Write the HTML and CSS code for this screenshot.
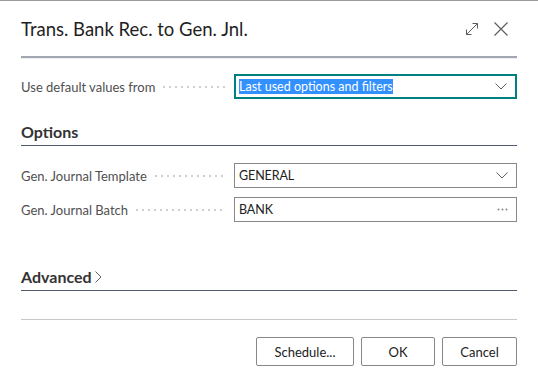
FILE: index.html
```html
<!DOCTYPE html>
<html lang="en">
<head>
    <meta charset="UTF-8">
    <title>Trans. Bank Rec. to Gen. Jnl.</title>
    <link rel="stylesheet" href="styles.css">
</head>
<body>
    <div class="dialog">
        <div class="dialog-header">
            <h1 class="dialog-title">Trans. Bank Rec. to Gen. Jnl.</h1>
            <div class="header-actions">
                <button class="icon-btn" title="Expand">
                    <svg width="14" height="14" viewBox="0 0 14 14" fill="none" stroke="#605e5c" stroke-width="1">
                        <path d="M1.5 12.5 L12.5 1.5 M7.5 1.5 H12.5 V6.5 M1.5 7.5 V12.5 H6.5"/>
                    </svg>
                </button>
                <button class="icon-btn" title="Close">
                    <svg width="16" height="16" viewBox="0 0 16 16" fill="none" stroke="#605e5c" stroke-width="1.2">
                        <path d="M1.5 1.5 L14.5 14.5 M14.5 1.5 L1.5 14.5"/>
                    </svg>
                </button>
            </div>
        </div>

        <div class="dialog-body">
            <div class="field-row first-row">
                <label class="field-label">Use default values from</label>
                <div class="field-input focused">
                    <span class="selected-text">Last used options and filters</span>
                    <svg class="field-icon" width="12" height="7" viewBox="0 0 12 7" fill="none" stroke="#605e5c" stroke-width="1">
                        <path d="M0.5 0.5 L6 6 L11.5 0.5"/>
                    </svg>
                </div>
            </div>

            <h2 class="group-title">Options</h2>

            <div class="field-list">
                <div class="field-row">
                    <label class="field-label">Gen. Journal Template</label>
                    <div class="field-input">
                        <span>GENERAL</span>
                        <svg class="field-icon" width="12" height="7" viewBox="0 0 12 7" fill="none" stroke="#605e5c" stroke-width="1">
                            <path d="M0.5 0.5 L6 6 L11.5 0.5"/>
                        </svg>
                    </div>
                </div>
                <div class="field-row">
                    <label class="field-label">Gen. Journal Batch</label>
                    <div class="field-input">
                        <span>BANK</span>
                        <svg class="field-icon" width="11" height="3" viewBox="0 0 11 3" fill="#8a8886">
                            <circle cx="1.5" cy="1.5" r="1"/>
                            <circle cx="5.5" cy="1.5" r="1"/>
                            <circle cx="9.5" cy="1.5" r="1"/>
                        </svg>
                    </div>
                </div>
            </div>

            <h2 class="group-title advanced">Advanced
                <svg width="7" height="12" viewBox="0 0 7 12" fill="none" stroke="#605e5c" stroke-width="1">
                    <path d="M0.5 0.5 L6 6 L0.5 11.5"/>
                </svg>
            </h2>
        </div>

        <div class="dialog-footer">
            <button class="footer-btn schedule">Schedule...</button>
            <button class="footer-btn ok">OK</button>
            <button class="footer-btn cancel">Cancel</button>
        </div>
    </div>
</body>
</html>
```

FILE: styles.css
```css
:root {
    --text-dark: #212121;
    --label-gray: #505050;
    --border-gray: #8a8886;
    --teal: #008080;
    --select-blue: #3390ff;
}

* {
    box-sizing: border-box;
}

body {
    margin: 0;
    font-family: Lato, 'Noto Sans', sans-serif;
    background-color: white;
    color: var(--text-dark);
}

.dialog {
    width: 538px;
    height: 389px;
    border-top: 1px solid #9a9a9a;
    background-color: white;
}

.dialog-header {
    display: flex;
    align-items: center;
    justify-content: space-between;
    height: 57px;
    margin: 0 21px;
    border-bottom: 2px solid #a2a8b2;
    box-shadow: 0 1px 0 #eeeeee;
}

.dialog-title {
    margin: 0;
    font-size: 18.5px;
    font-weight: 400;
    color: #1f1f1f;
}

.header-actions {
    display: flex;
    align-items: center;
    gap: 14px;
    margin-right: 8px;
}

.icon-btn {
    display: flex;
    padding: 0;
    border: none;
    background: none;
}

.dialog-body {
    padding: 16px 21px 0;
}

.field-row {
    display: grid;
    grid-template-columns: 213px 283px;
    align-items: center;
}

.field-label {
    font-size: 13px;
    color: var(--label-gray);
    display: flex;
    align-items: center;
    white-space: nowrap;
    overflow: hidden;
}

.field-label::after {
    content: '';
    flex: 1;
    margin: 0 8px 0 6px;
    height: 2px;
    background-image: radial-gradient(circle, #cfcfcf 1px, transparent 1px);
    background-size: 6px 2px;
}

.field-input {
    display: flex;
    align-items: center;
    justify-content: space-between;
    height: 25px;
    padding: 0 8px 0 4px;
    border: 1px solid var(--border-gray);
    font-size: 12.5px;
    letter-spacing: -0.1px;
    color: var(--text-dark);
}

.field-input.focused {
    border: 2px solid var(--teal);
    padding-left: 3px;
}

.selected-text {
    background-color: var(--select-blue);
    color: white;
    line-height: 15px;
    letter-spacing: 0;
}

.group-title {
    margin: 23px 0 0;
    padding-bottom: 3px;
    font-size: 16px;
    line-height: 20px;
    font-weight: 700;
    color: #333333;
    border-bottom: 1px solid #505c6d;
}

.field-list {
    display: grid;
    gap: 9px;
    margin-top: 17px;
}

.group-title.advanced {
    margin-top: 45px;
    display: flex;
    align-items: center;
    gap: 3px;
}

.dialog-footer {
    display: flex;
    justify-content: flex-end;
    gap: 7px;
    margin: 28px 21px 0;
    padding-top: 17px;
    border-top: 1px solid #c8c8c8;
}

.footer-btn {
    height: 29px;
    padding: 0;
    border: 1px solid var(--border-gray);
    border-radius: 2px;
    background-color: white;
    font-family: inherit;
    font-size: 13px;
    color: var(--text-dark);
}

.schedule {
    width: 98px;
}

.ok {
    width: 74px;
}

.cancel {
    width: 75px;
}
```
